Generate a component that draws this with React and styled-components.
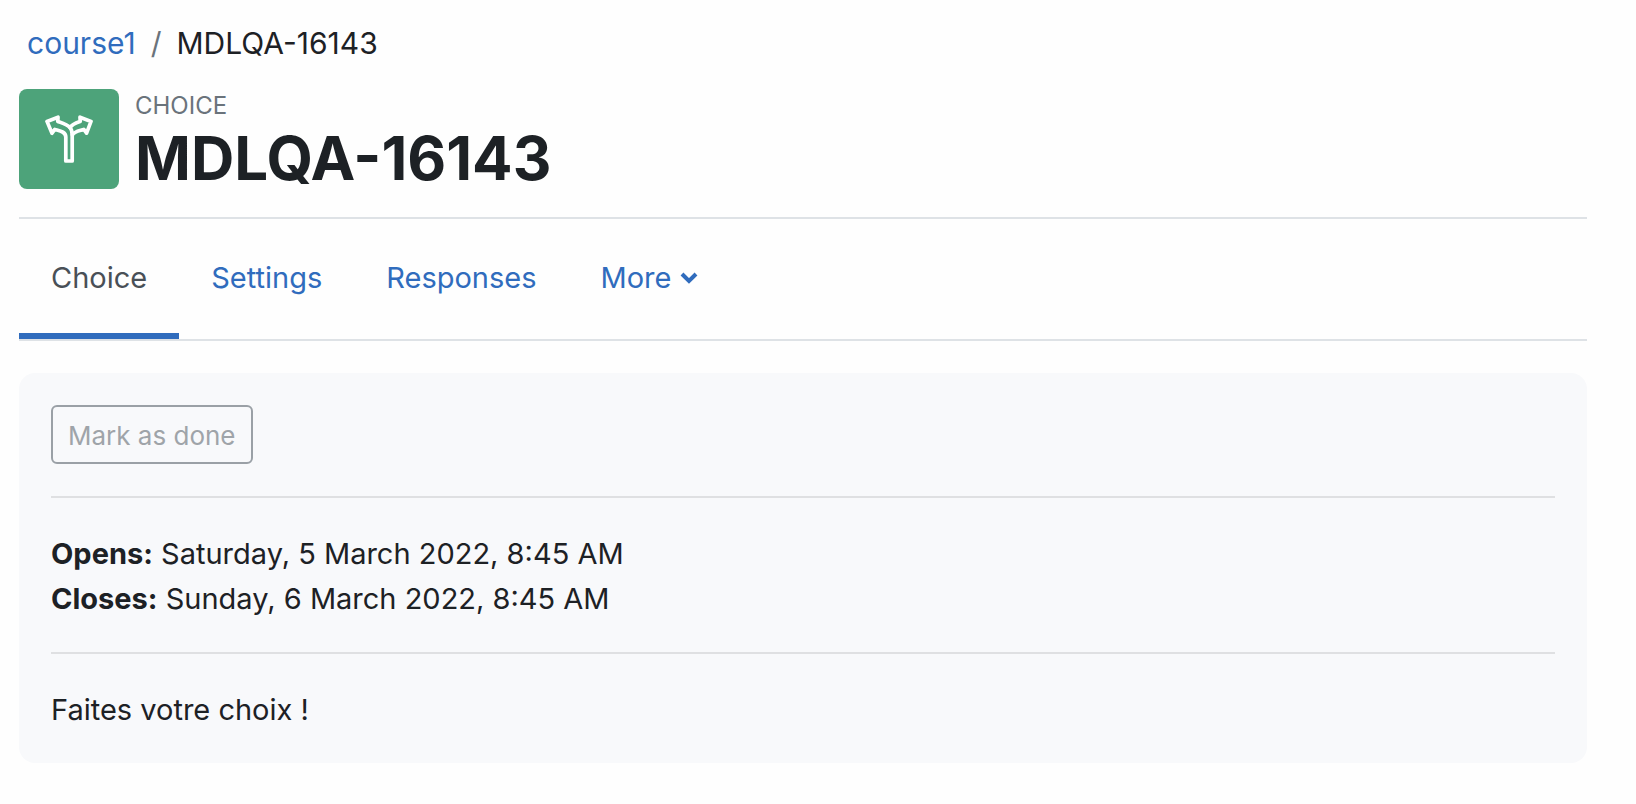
import React from "react";
import styled, { createGlobalStyle } from "styled-components";

const GlobalStyle = createGlobalStyle`
  *, *::before, *::after { box-sizing: border-box; }
  body {
    margin: 0;
    background: #fefefe;
    color: #1d2125;
    font-family: Inter, "Liberation Sans", sans-serif;
    font-size: 29px;
    line-height: 45px;
  }
`;

const Page = styled.main`
  padding: 21px 49px 41px 19px;
`;

const Breadcrumb = styled.ol`
  display: flex;
  gap: 15px;
  margin: 0 0 23px;
  padding: 0 8px;
  list-style: none;
  font-size: 30px;
`;

const Crumb = styled.li`
  display: flex;
  gap: 15px;

  & + &::before {
    content: "/";
    color: #6a737b;
  }
`;

const CrumbLink = styled.a`
  color: #306cbd;
  text-decoration: none;
`;

const Header = styled.header`
  display: flex;
  align-items: flex-start;
  gap: 16px;
  padding-bottom: 24px;
`;

const ActivityIcon = styled.div`
  display: flex;
  align-items: center;
  justify-content: center;
  flex: none;
  width: 100px;
  height: 100px;
  border-radius: 8px;
  background: #4da37a;
`;

const ActivityType = styled.div`
  color: #6a737b;
  font-size: 24px;
  line-height: 34px;
  text-transform: uppercase;
`;

const Title = styled.h1`
  margin: 0;
  font-size: 60px;
  font-weight: 700;
  line-height: 70px;
`;

const TabBar = styled.nav`
  display: flex;
  border-top: 2px solid #dee2e6;
  border-bottom: 2px solid #dee2e6;
`;

const Tab = styled.a`
  padding: 36px 32px 33px;
  border-bottom: 6px solid ${({ $active }) => ($active ? "#306cbd" : "transparent")};
  color: ${({ $active }) => ($active ? "#495057" : "#306cbd")};
  text-decoration: none;
`;

const MenuTab = styled.button`
  display: flex;
  align-items: center;
  gap: 9px;
  padding: 36px 32px 33px;
  border: 0;
  border-bottom: 6px solid transparent;
  background: none;
  color: #306cbd;
  font: inherit;
`;

const Card = styled.section`
  margin-top: 32px;
  padding: 32px 32px 31px;
  border-radius: 16px;
  background: #f8f9fb;
`;

const DoneButton = styled.button`
  display: block;
  height: 59px;
  margin-bottom: 32px;
  padding: 1px 15px 0;
  border: 2px solid #9aa0a6;
  border-radius: 6px;
  background: transparent;
  color: #9fa4a9;
  font: inherit;
  font-size: 26px;
`;

const Divider = styled.hr`
  height: 2px;
  margin: 31px 0 33px;
  border: 0;
  background: #dfe0e2;
`;

const Text = styled.p`
  margin: 0;
`;

const ChoiceGlyph = () => (
  <svg width="48" height="48" viewBox="0 0 48 48" fill="none" stroke="#fff" strokeWidth="3.7" strokeLinejoin="round" strokeLinecap="round" aria-hidden="true">
    <path d="M20.8 46V22C20.8 16.5 14.5 15.8 9.8 14.4L7 18.2L2 6.4L13 2.2L12.8 6.4C17 7.8 22 9 25 12.6C27.2 15 27.2 17.4 27.2 20V46Z" />
    <path d="M25 12.6C27 9.2 30.6 8 35.2 6.4L35 2.2L46 6.4L41.6 18.2L38.8 14.4C34.6 15.8 29.4 16.4 27.4 19.8" />
  </svg>
);

const ChevronDown = () => (
  <svg width="18" height="12" viewBox="0 0 18 12" fill="none" stroke="currentColor" strokeWidth="4" aria-hidden="true">
    <path d="M2 2L9 9L16 2" />
  </svg>
);

const tabs = ["Choice", "Settings", "Responses"];

export default function App() {
  return (
    <Page>
      <GlobalStyle />
      <nav aria-label="Breadcrumb">
        <Breadcrumb>
          <Crumb><CrumbLink href="#course">course1</CrumbLink></Crumb>
          <Crumb aria-current="page">MDLQA-16143</Crumb>
        </Breadcrumb>
      </nav>
      <Header>
        <ActivityIcon><ChoiceGlyph /></ActivityIcon>
        <div>
          <ActivityType>Choice</ActivityType>
          <Title>MDLQA-16143</Title>
        </div>
      </Header>
      <TabBar aria-label="Activity">
        {tabs.map((name, i) => (
          <Tab key={name} href={`#${name.toLowerCase()}`} $active={i === 0} aria-current={i === 0 ? "page" : undefined}>
            {name}
          </Tab>
        ))}
        <MenuTab type="button" aria-haspopup="menu">More<ChevronDown /></MenuTab>
      </TabBar>
      <Card>
        <DoneButton type="button" disabled>Mark as done</DoneButton>
        <Divider />
        <Text><strong>Opens:</strong> Saturday, 5 March 2022, 8:45 AM</Text>
        <Text><strong>Closes:</strong> Sunday, 6 March 2022, 8:45 AM</Text>
        <Divider />
        <Text>Faites votre choix !</Text>
      </Card>
    </Page>
  );
}
